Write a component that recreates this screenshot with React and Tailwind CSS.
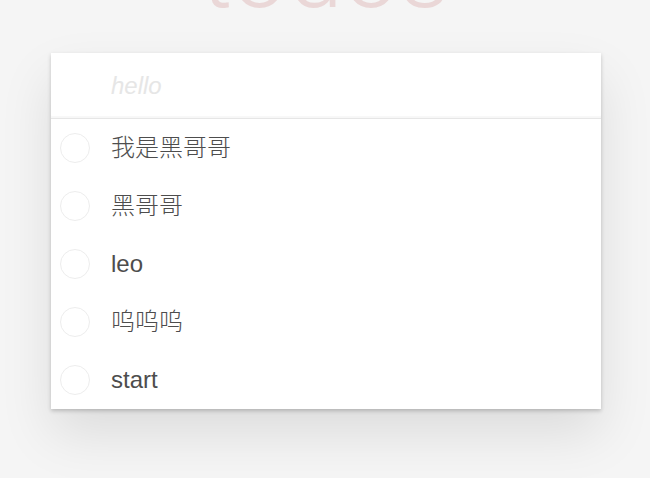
import { useState } from 'react'

const FONT = '"Liberation Sans", "Noto Sans CJK SC", sans-serif'

const TODOS = [
  { id: 1, title: '我是黑哥哥' },
  { id: 2, title: '黑哥哥' },
  { id: 3, title: 'leo' },
  { id: 4, title: '呜呜呜' },
  { id: 5, title: 'start' },
]

function TodoItem({ todo }) {
  return (
    <li className="flex h-[58px] items-center">
      <span className="ml-[9px] h-[30px] w-[30px] shrink-0 rounded-full border border-[#ededed]" />
      <label className="ml-[21px] text-[24px] leading-[1.2] font-light text-[#4d4d4d]">{todo.title}</label>
    </li>
  )
}

export default function App() {
  const [text, setText] = useState('')

  return (
    <div className="flex min-h-screen flex-col overflow-hidden bg-[#f5f5f5]" style={{ fontFamily: FONT }}>
      <h1 className="-mt-[77px] h-[100px] text-center font-['Roboto',sans-serif] text-[100px] leading-[100px] font-light text-[rgba(175,47,47,0.15)]">
        todos
      </h1>

      <section className="mt-[30px] ml-[51px] w-[550px] bg-white shadow-[0_2px_4px_0_rgba(0,0,0,0.2),0_25px_50px_0_rgba(0,0,0,0.1)]">
        <header>
          <input
            value={text}
            onChange={e => setText(e.target.value)}
            placeholder="hello"
            className="block h-[66px] w-full border-b border-[#e6e6e6] bg-transparent pr-4 pl-[60px] text-[24px] font-light text-[#4d4d4d] shadow-[inset_0_-2px_1px_rgba(0,0,0,0.03)] outline-none placeholder:italic placeholder:text-[#e6e6e6]"
          />
        </header>
        <ul>
          {TODOS.map(t => <TodoItem key={t.id} todo={t} />)}
        </ul>
      </section>
    </div>
  )
}
